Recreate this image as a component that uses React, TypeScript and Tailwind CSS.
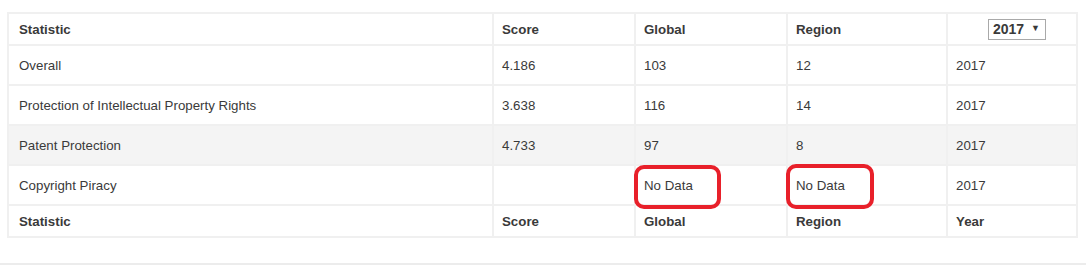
import React from "react";

const rows = [
  { s: "Overall", sc: "4.186", g: "103", r: "12", y: "2017", bg: "bg-white" },
  { s: "Protection of Intellectual Property Rights", sc: "3.638", g: "116", r: "14", y: "2017", bg: "bg-white" },
  { s: "Patent Protection", sc: "4.733", g: "97", r: "8", y: "2017", bg: "bg-[#f4f4f4]" },
  { s: "Copyright Piracy", sc: "", g: "No Data", r: "No Data", y: "2017", bg: "bg-white" },
];

export default function App() {
  return (
    <div className="w-[1086px] h-[280px] bg-white relative" style={{ fontFamily: '"Liberation Sans", Arial, sans-serif' }}>
      <div className="pt-[12px] pl-[7px] w-[1078px]">
        <table className="w-[1071px] border-collapse border-2 border-[#f0f0f0] text-[13.3px] text-[#3a3a3a]">
          <colgroup>
            <col className="w-[485px]" />
            <col className="w-[142px]" />
            <col className="w-[152px]" />
            <col className="w-[160px]" />
            <col />
          </colgroup>
          <thead>
            <tr className="h-[32px]">
              <th className="border-2 border-[#f0f0f0] text-left font-bold pl-[10px] pt-[2px]">Statistic</th>
              <th className="border-2 border-[#f0f0f0] text-left font-bold pl-[8px] pt-[2px]">Score</th>
              <th className="border-2 border-[#f0f0f0] text-left font-bold pl-[8px] pt-[2px]">Global</th>
              <th className="border-2 border-[#f0f0f0] text-left font-bold pl-[8px] pt-[2px]">Region</th>
              <th className="border-2 border-[#f0f0f0] text-right font-bold pr-[30px]">
                <span className="inline-flex items-center gap-[7px] border border-[#a9a9a9] h-[21px] pl-[4px] pr-[5px] text-[14px] font-bold">
                  2017 <span className="text-[9px]">▼</span>
                </span>
              </th>
            </tr>
          </thead>
          <tbody>
            {rows.map((r) => (
              <tr key={r.s} className={`h-[40px] ${r.bg}`}>
                <td className="border-2 border-[#f0f0f0] pl-[10px] pt-[2px]">{r.s}</td>
                <td className="border-2 border-[#f0f0f0] pl-[8px] pt-[2px]">{r.sc}</td>
                <td className="border-2 border-[#f0f0f0] pl-[8px] pt-[2px]">{r.g}</td>
                <td className="border-2 border-[#f0f0f0] pl-[8px] pt-[2px]">{r.r}</td>
                <td className="border-2 border-[#f0f0f0] pl-[8px] pt-[2px]">{r.y}</td>
              </tr>
            ))}
          </tbody>
          <tfoot>
            <tr className="h-[32px]">
              <th className="border-2 border-[#f0f0f0] text-left font-bold pl-[10px] pt-[2px]">Statistic</th>
              <th className="border-2 border-[#f0f0f0] text-left font-bold pl-[8px] pt-[2px]">Score</th>
              <th className="border-2 border-[#f0f0f0] text-left font-bold pl-[8px] pt-[2px]">Global</th>
              <th className="border-2 border-[#f0f0f0] text-left font-bold pl-[8px] pt-[2px]">Region</th>
              <th className="border-2 border-[#f0f0f0] text-left font-bold pl-[8px] pt-[2px]">Year</th>
            </tr>
          </tfoot>
        </table>
      </div>
      <div className="absolute left-0 right-0 top-[263px] h-[2px] bg-[#ececec]" />
      <div className="absolute left-[634px] top-[165px] w-[87px] h-[44px] border-[4px] border-[#e8202a] rounded-[10px]" />
      <div className="absolute left-[786px] top-[164px] w-[88px] h-[45px] border-[4px] border-[#e8202a] rounded-[10px]" />
    </div>
  );
}
